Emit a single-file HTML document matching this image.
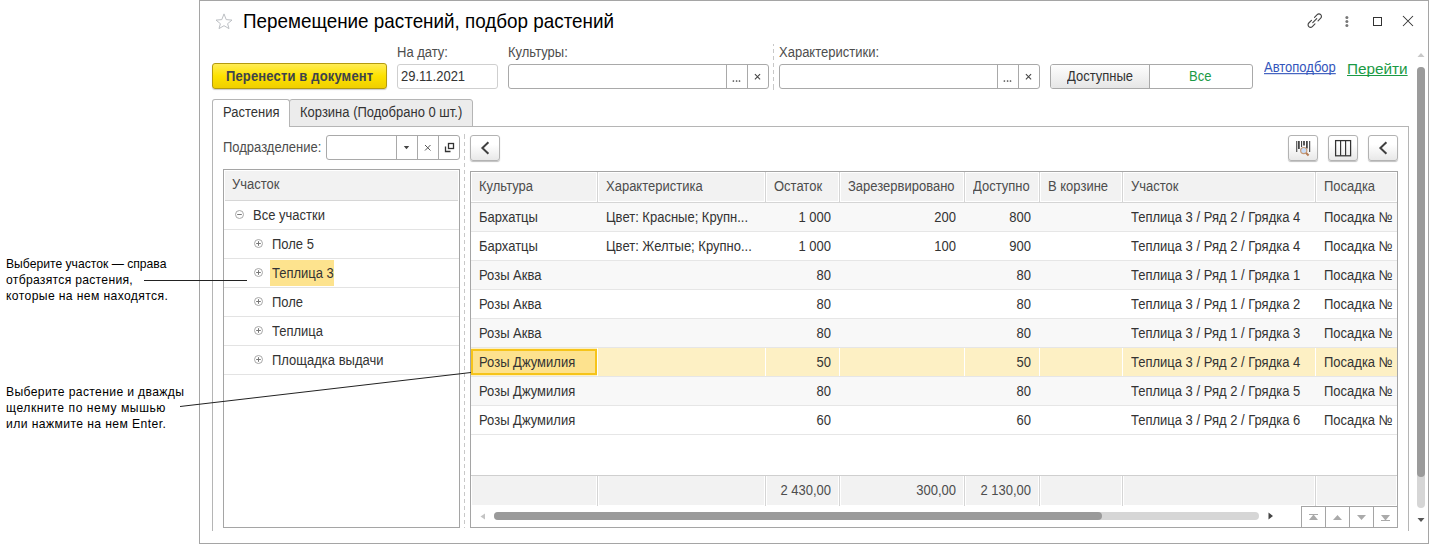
<!DOCTYPE html>
<html><head><meta charset="utf-8">
<style>
*{box-sizing:border-box;margin:0;padding:0}
html,body{width:1429px;height:544px;overflow:hidden;background:#fff}
body{position:relative;font-family:"Liberation Sans",sans-serif;font-size:13px;color:#333}
.a{position:absolute}
.t{position:absolute;white-space:nowrap;line-height:15px;transform:scaleY(1.1);transform-origin:0 12px}
.note{position:absolute;font-size:13.5px;color:#000;line-height:16px;white-space:nowrap;transform:scaleX(0.9);transform-origin:0 0}
.fld{position:absolute;border:1px solid #a9a9a9;border-radius:3px;background:#fff}
.sep{position:absolute;top:0;bottom:0;width:1px;background:#a9a9a9}
.btn{position:absolute;border:1px solid #b3b3b3;border-radius:3px;background:linear-gradient(#fff 35%,#e8e8e8);box-shadow:0 1px 1px rgba(0,0,0,.25)}
.vdash{position:absolute;width:1px;background:repeating-linear-gradient(#c8c8c8 0 4px,transparent 4px 7px);background-position:0 -2px}
.row{position:absolute;left:1px;right:1px;height:29px;border-bottom:1px solid #e4e4e4}
.g{background:#f8f8f8}
.hsep{position:absolute;top:0;bottom:0;width:2px;border-left:1px solid #d4d4d4;border-right:1px solid #fff}
</style></head><body>

<!-- annotations -->
<div class="note" style="left:6px;top:256px"><div style="letter-spacing:0px">Выберите участок — справа</div><div style="letter-spacing:0.32px">отбразятся растения,</div><div style="letter-spacing:0.42px">которые на нем находятся.</div></div>
<div class="note" style="left:6px;top:384px"><div style="letter-spacing:0.39px">Выберите растение и дважды</div><div style="letter-spacing:0.6px">щелкните по нему мышью</div><div style="letter-spacing:0.45px">или нажмите на нем Enter.</div></div>

<!-- window -->
<div class="a" style="left:199px;top:0;width:1230px;height:544px;border:1px solid #a5a5a5;background:#fff"></div>

<!-- star -->
<svg class="a" style="left:215px;top:13px" width="18" height="17" viewBox="0 0 18 17"><path d="M9 0.9 L11.2 6.6 L17 7.1 L12.6 10.7 L14 15.6 L9 12.7 L4 15.6 L5.4 10.7 L1 7.1 L6.8 6.6 Z" fill="none" stroke="#b8bcc0" stroke-width="0.95" stroke-linejoin="round"/></svg>
<div class="t" style="left:243px;top:11px;font-size:18.85px;line-height:22px;color:#000;transform:scaleY(1.08);transform-origin:0 17.6px">Перемещение растений, подбор растений</div>

<!-- title icons -->
<svg class="a" style="left:1305px;top:11px" width="20" height="19" viewBox="0 0 20 19">
<g transform="translate(9.75 9.6) scale(0.88) translate(-9.75 -9.25)"><path d="M9.5 5.5 L12.5 2.5 a2.6 2.6 0 0 1 4 4 L13.5 9.5 M10 13 L7 16 a2.6 2.6 0 0 1 -4 -4 L6 9 M7.5 11.5 L12 7" fill="none" stroke="#444" stroke-width="1.3" stroke-linecap="round"/></g></svg>
<svg class="a" style="left:1344px;top:15px" width="6" height="14"><circle cx="2.9" cy="2.6" r="1.5" fill="#777"/><circle cx="2.9" cy="6.6" r="1.5" fill="#777"/><circle cx="2.9" cy="10.5" r="1.5" fill="#777"/></svg>
<div class="a" style="left:1373px;top:17px;width:9px;height:9px;border:1.4px solid #333"></div>
<svg class="a" style="left:1402px;top:15px" width="12" height="12" viewBox="0 0 12 12"><path d="M1 1 L11 11 M11 1 L1 11" stroke="#333" stroke-width="1.05"/></svg>

<!-- labels -->
<div class="t" style="left:397px;top:45px;color:#4d4d4d">На дату:</div>
<div class="t" style="left:508px;top:45px;color:#4d4d4d">Культуры:</div>
<div class="t" style="left:779px;top:45px;color:#4d4d4d">Характеристики:</div>

<!-- yellow button -->
<div class="a" style="left:212px;top:63px;width:175px;height:26px;border:1px solid #b39a10;border-radius:3px;background:linear-gradient(#ffec55,#fde200 50%,#f0cf00);box-shadow:0 1px 1px rgba(0,0,0,.2)"></div>
<div class="t" style="left:226px;top:69px;font-weight:bold;color:#3e434c;letter-spacing:0.15px">Перенести в документ</div>

<!-- date -->
<div class="fld" style="left:397px;top:64px;width:101px;height:25px;border-color:#cfcfcf"></div>
<div class="t" style="left:401px;top:69px;color:#333">29.11.2021</div>

<!-- cultures -->
<div class="fld" style="left:508px;top:64px;width:261px;height:25px">
 <div class="sep" style="left:217px"></div><div class="sep" style="left:238px"></div>
 <svg class="a" style="left:222px;top:14px" width="12" height="4"><circle cx="2.4" cy="2" r="0.85" fill="#444"/><circle cx="5.6" cy="2" r="0.85" fill="#444"/><circle cx="8.5" cy="2" r="0.85" fill="#444"/></svg>
 <svg class="a" style="left:244px;top:8px" width="9" height="8"><path d="M1.9 1.1L7.1 6.3M7.1 1.1L1.9 6.3" stroke="#444" stroke-width="1.05"/></svg>
</div>
<div class="vdash" style="left:773px;top:44px;height:46px"></div>
<div class="fld" style="left:779px;top:64px;width:261px;height:25px">
 <div class="sep" style="left:217px"></div><div class="sep" style="left:238px"></div>
 <svg class="a" style="left:222px;top:14px" width="12" height="4"><circle cx="2.4" cy="2" r="0.85" fill="#444"/><circle cx="5.6" cy="2" r="0.85" fill="#444"/><circle cx="8.5" cy="2" r="0.85" fill="#444"/></svg>
 <svg class="a" style="left:244px;top:8px" width="9" height="8"><path d="M1.9 1.1L7.1 6.3M7.1 1.1L1.9 6.3" stroke="#444" stroke-width="1.05"/></svg>
</div>

<!-- toggle -->
<div class="a" style="left:1050px;top:64px;width:203px;height:25px;border:1px solid #a9a9a9;border-radius:3px;background:#fff;overflow:hidden">
 <div class="a" style="left:0;top:0;width:99px;height:23px;background:linear-gradient(#fdfdfd,#e6e6e6);border-right:1px solid #a9a9a9"></div>
</div>
<div class="t" style="left:1067px;top:69px;color:#333">Доступные</div>
<div class="t" style="left:1189px;top:69px;color:#1a9a45">Все</div>

<div class="t" style="left:1264px;top:60px;color:#3355bb;text-decoration:underline;text-decoration-skip-ink:none">Автоподбор</div>
<div class="t" style="left:1347px;top:60px;font-size:15.3px;line-height:17px;color:#1a9a45;text-decoration:underline;text-decoration-skip-ink:none;transform:none">Перейти</div>

<!-- vertical scrollbar -->
<svg class="a" style="left:1417px;top:52px" width="8" height="6"><path d="M0.5 5 L4 1 L7.5 5Z" fill="#c8c8c8"/></svg>
<div class="a" style="left:1417px;top:67px;width:8px;height:441px;border-radius:4px;background:#d6d6d6"></div>
<div class="a" style="left:1417px;top:67px;width:8px;height:410px;border-radius:4px;background:#9b9b9b"></div>
<svg class="a" style="left:1417px;top:517px" width="8" height="6"><path d="M0.5 1 L4 5 L7.5 1Z" fill="#555"/></svg>

<!-- tabs -->
<div class="a" style="left:289px;top:99px;width:184px;height:28px;border:1px solid #b5b5b5;border-radius:3px 3px 0 0;background:#ececec"></div>
<div class="a" style="left:212px;top:99px;width:78px;height:28px;border:1px solid #b5b5b5;border-bottom:none;border-radius:3px 3px 0 0;background:#fff"></div>
<div class="t" style="left:223px;top:105px;color:#333">Растения</div>
<div class="t" style="left:300px;top:105px;color:#333">Корзина (Подобрано 0 шт.)</div>
<div class="a" style="left:289px;top:126px;width:1120px;height:1px;background:#b5b5b5"></div>
<div class="a" style="left:212px;top:126px;width:1px;height:405px;background:#b5b5b5"></div>
<div class="a" style="left:1408px;top:126px;width:1px;height:405px;background:#b5b5b5"></div>

<!-- subdivision -->
<div class="t" style="left:223px;top:140px;color:#4d4d4d">Подразделение:</div>
<div class="fld" style="left:326px;top:135px;width:134px;height:25px">
 <div class="sep" style="left:69px"></div><div class="sep" style="left:90px"></div><div class="sep" style="left:111px"></div>
</div>
<div class="vdash" style="left:464px;top:134px;height:394px;background-position:0 1px"></div>

<!-- tree -->
<div class="a" style="left:223px;top:169px;width:237px;height:359px;border:1px solid #a5a5a5;background:#fff">
 <div class="a" style="left:1px;top:1px;right:1px;height:30px;background:#f2f2f2;border-bottom:1px solid #d6d6d6"></div>
</div>
<div class="t" style="left:232px;top:177px;color:#4d4d4d">Участок</div>

<!-- grid -->
<div class="a" style="left:470px;top:171px;width:928px;height:357px;border:1px solid #a5a5a5;background:#fff"></div>

<!-- tree rows -->
<div class="a" style="left:224px;top:229px;width:235px;height:1px;background:#e3e3e3"></div>
<div class="a" style="left:224px;top:258px;width:235px;height:1px;background:#e3e3e3"></div>
<div class="a" style="left:224px;top:287px;width:235px;height:1px;background:#e3e3e3"></div>
<div class="a" style="left:224px;top:316px;width:235px;height:1px;background:#e3e3e3"></div>
<div class="a" style="left:224px;top:345px;width:235px;height:1px;background:#e3e3e3"></div>
<div class="a" style="left:224px;top:374px;width:235px;height:1px;background:#e3e3e3"></div>
<div class="a" style="left:270px;top:260px;width:64px;height:26px;background:#fde38e"></div>
<svg class="a" style="left:234px;top:209px" width="11" height="11"><circle cx="5.5" cy="5.5" r="4" fill="none" stroke="#a8a8a8"/><path d="M3.2 5.5H7.8" stroke="#777"/></svg>
<svg class="a" style="left:253px;top:238px" width="11" height="11"><circle cx="5.5" cy="5.5" r="4" fill="none" stroke="#a8a8a8"/><path d="M3.2 5.5H7.8M5.5 3.2V7.8" stroke="#777"/></svg>
<svg class="a" style="left:253px;top:267px" width="11" height="11"><circle cx="5.5" cy="5.5" r="4" fill="none" stroke="#a8a8a8"/><path d="M3.2 5.5H7.8M5.5 3.2V7.8" stroke="#777"/></svg>
<svg class="a" style="left:253px;top:296px" width="11" height="11"><circle cx="5.5" cy="5.5" r="4" fill="none" stroke="#a8a8a8"/><path d="M3.2 5.5H7.8M5.5 3.2V7.8" stroke="#777"/></svg>
<svg class="a" style="left:253px;top:325px" width="11" height="11"><circle cx="5.5" cy="5.5" r="4" fill="none" stroke="#a8a8a8"/><path d="M3.2 5.5H7.8M5.5 3.2V7.8" stroke="#777"/></svg>
<svg class="a" style="left:253px;top:354px" width="11" height="11"><circle cx="5.5" cy="5.5" r="4" fill="none" stroke="#a8a8a8"/><path d="M3.2 5.5H7.8M5.5 3.2V7.8" stroke="#777"/></svg>
<div class="t" style="left:253px;top:208px">Все участки</div>
<div class="t" style="left:272px;top:237px">Поле 5</div>
<div class="t" style="left:272px;top:266px">Теплица 3</div>
<div class="t" style="left:272px;top:295px">Поле</div>
<div class="t" style="left:272px;top:324px">Теплица</div>
<div class="t" style="left:272px;top:353px">Площадка выдачи</div>

<!-- nav left button -->
<div class="btn" style="left:470px;top:135px;width:30px;height:26px"></div>
<svg class="a" style="left:479px;top:141px" width="12" height="14"><path d="M9.4 1.3 L3.4 7 L9.4 12.7" fill="none" stroke="#404040" stroke-width="2"/></svg>
<!-- right toolbar buttons -->
<div class="btn" style="left:1288px;top:135px;width:30px;height:26px"></div>
<div class="btn" style="left:1328px;top:135px;width:30px;height:26px"></div>
<div class="btn" style="left:1368px;top:135px;width:30px;height:26px"></div>
<svg class="a" style="left:1294px;top:139px" width="20" height="20">
<path d="M2.75 2V13M7.6 2V8M15.7 2V13" stroke="#333" stroke-width="1"/>
<path d="M4.9 2V10M10 2V6.6M12.9 2V9.5" stroke="#333" stroke-width="1.6"/>
<circle cx="9.75" cy="11.6" r="3.1" fill="#c8dcf6" stroke="#c49a78" stroke-width="1.2"/>
<path d="M12.1 14 L14.6 16.5" stroke="#b57c55" stroke-width="2"/>
</svg>
<svg class="a" style="left:1334px;top:139px" width="18" height="18"><rect x="1.6" y="1.6" width="15" height="15.2" fill="none" stroke="#333" stroke-width="1.25"/><path d="M6.6 1.6V16.8M11.6 1.6V16.8" stroke="#333" stroke-width="1.15"/></svg>
<svg class="a" style="left:1377px;top:141px" width="12" height="14"><path d="M9.4 1.3 L3.4 7 L9.4 12.7" fill="none" stroke="#404040" stroke-width="2"/></svg>
<!-- subdivision field icons -->
<svg class="a" style="left:403px;top:145px" width="8" height="5"><path d="M0.8 1H6.2L3.5 4.2Z" fill="#444"/></svg>
<svg class="a" style="left:424px;top:144px" width="8" height="8"><path d="M1 1L6.5 6.5M6.5 1L1 6.5" stroke="#555" stroke-width="1"/></svg>
<svg class="a" style="left:444px;top:142px" width="11" height="11"><path d="M1.5 4.5V9.5H6.5" fill="none" stroke="#333" stroke-width="1.3"/><rect x="4.5" y="1.5" width="5" height="5" fill="none" stroke="#333" stroke-width="1.3"/></svg>
<!-- grid header -->
<div class="a" style="left:471px;top:172px;width:926px;height:30px;background:#fff"></div>
<div class="a" style="left:471px;top:172px;width:126px;height:30px;border:1px solid #fff;background:#f2f2f2"></div>
<div class="a" style="left:597px;top:172px;width:1px;height:30px;background:#d5d5d5"></div>
<div class="t" style="left:479px;top:179px;color:#4d4d4d">Культура</div>
<div class="a" style="left:598px;top:172px;width:167px;height:30px;border:1px solid #fff;background:#f2f2f2"></div>
<div class="a" style="left:765px;top:172px;width:1px;height:30px;background:#d5d5d5"></div>
<div class="t" style="left:606px;top:179px;color:#4d4d4d">Характеристика</div>
<div class="a" style="left:766px;top:172px;width:73px;height:30px;border:1px solid #fff;background:#f2f2f2"></div>
<div class="a" style="left:839px;top:172px;width:1px;height:30px;background:#d5d5d5"></div>
<div class="t" style="left:774px;top:179px;color:#4d4d4d">Остаток</div>
<div class="a" style="left:840px;top:172px;width:124px;height:30px;border:1px solid #fff;background:#f2f2f2"></div>
<div class="a" style="left:964px;top:172px;width:1px;height:30px;background:#d5d5d5"></div>
<div class="t" style="left:848px;top:179px;color:#4d4d4d">Зарезервировано</div>
<div class="a" style="left:965px;top:172px;width:74px;height:30px;border:1px solid #fff;background:#f2f2f2"></div>
<div class="a" style="left:1039px;top:172px;width:1px;height:30px;background:#d5d5d5"></div>
<div class="t" style="left:973px;top:179px;color:#4d4d4d">Доступно</div>
<div class="a" style="left:1040px;top:172px;width:82px;height:30px;border:1px solid #fff;background:#f2f2f2"></div>
<div class="a" style="left:1122px;top:172px;width:1px;height:30px;background:#d5d5d5"></div>
<div class="t" style="left:1048px;top:179px;color:#4d4d4d">В корзине</div>
<div class="a" style="left:1123px;top:172px;width:192px;height:30px;border:1px solid #fff;background:#f2f2f2"></div>
<div class="a" style="left:1315px;top:172px;width:1px;height:30px;background:#d5d5d5"></div>
<div class="t" style="left:1131px;top:179px;color:#4d4d4d">Участок</div>
<div class="a" style="left:1316px;top:172px;width:81px;height:30px;border:1px solid #fff;background:#f2f2f2"></div>
<div class="t" style="left:1324px;top:179px;color:#4d4d4d">Посадка</div>
<div class="a" style="left:471px;top:202px;width:926px;height:1px;background:#d5d5d5"></div>
<!-- grid rows -->
<div class="a" style="left:471px;top:203px;width:926px;height:28px;background:#f8f8f8"></div>
<div class="a" style="left:471px;top:231px;width:926px;height:1px;background:#e6e6e6"></div>
<div class="t" style="left:479px;top:210px;color:#333">Бархатцы</div>
<div class="t" style="left:606px;top:210px;color:#333">Цвет: Красные; Крупн...</div>
<div class="t" style="right:598px;top:210px;color:#333">1 000</div>
<div class="t" style="right:473px;top:210px;color:#333">200</div>
<div class="t" style="right:398px;top:210px;color:#333">800</div>
<div class="t" style="left:1131px;top:210px;color:#333">Теплица 3 / Ряд 2 / Грядка 4</div>
<div class="t" style="left:1324px;top:210px;color:#333">Посадка №</div>
<div class="a" style="left:471px;top:232px;width:926px;height:28px;background:#fff"></div>
<div class="a" style="left:471px;top:260px;width:926px;height:1px;background:#e6e6e6"></div>
<div class="t" style="left:479px;top:239px;color:#333">Бархатцы</div>
<div class="t" style="left:606px;top:239px;color:#333">Цвет: Желтые; Крупно...</div>
<div class="t" style="right:598px;top:239px;color:#333">1 000</div>
<div class="t" style="right:473px;top:239px;color:#333">100</div>
<div class="t" style="right:398px;top:239px;color:#333">900</div>
<div class="t" style="left:1131px;top:239px;color:#333">Теплица 3 / Ряд 2 / Грядка 4</div>
<div class="t" style="left:1324px;top:239px;color:#333">Посадка №</div>
<div class="a" style="left:471px;top:261px;width:926px;height:28px;background:#f8f8f8"></div>
<div class="a" style="left:471px;top:289px;width:926px;height:1px;background:#e6e6e6"></div>
<div class="t" style="left:479px;top:268px;color:#333">Розы Аква</div>
<div class="t" style="right:598px;top:268px;color:#333">80</div>
<div class="t" style="right:398px;top:268px;color:#333">80</div>
<div class="t" style="left:1131px;top:268px;color:#333">Теплица 3 / Ряд 1 / Грядка 1</div>
<div class="t" style="left:1324px;top:268px;color:#333">Посадка №</div>
<div class="a" style="left:471px;top:290px;width:926px;height:28px;background:#fff"></div>
<div class="a" style="left:471px;top:318px;width:926px;height:1px;background:#e6e6e6"></div>
<div class="t" style="left:479px;top:297px;color:#333">Розы Аква</div>
<div class="t" style="right:598px;top:297px;color:#333">80</div>
<div class="t" style="right:398px;top:297px;color:#333">80</div>
<div class="t" style="left:1131px;top:297px;color:#333">Теплица 3 / Ряд 1 / Грядка 2</div>
<div class="t" style="left:1324px;top:297px;color:#333">Посадка №</div>
<div class="a" style="left:471px;top:319px;width:926px;height:28px;background:#f8f8f8"></div>
<div class="a" style="left:471px;top:347px;width:926px;height:1px;background:#e6e6e6"></div>
<div class="t" style="left:479px;top:326px;color:#333">Розы Аква</div>
<div class="t" style="right:598px;top:326px;color:#333">80</div>
<div class="t" style="right:398px;top:326px;color:#333">80</div>
<div class="t" style="left:1131px;top:326px;color:#333">Теплица 3 / Ряд 1 / Грядка 3</div>
<div class="t" style="left:1324px;top:326px;color:#333">Посадка №</div>
<div class="a" style="left:471px;top:348px;width:926px;height:28px;background:#fdf0c4"></div>
<div class="a" style="left:471px;top:376px;width:926px;height:1px;background:#e6e6e6"></div>
<div class="a" style="left:597px;top:348px;width:1px;height:28px;background:#fff"></div>
<div class="a" style="left:765px;top:348px;width:1px;height:28px;background:#fff"></div>
<div class="a" style="left:839px;top:348px;width:1px;height:28px;background:#fff"></div>
<div class="a" style="left:964px;top:348px;width:1px;height:28px;background:#fff"></div>
<div class="a" style="left:1039px;top:348px;width:1px;height:28px;background:#fff"></div>
<div class="a" style="left:1122px;top:348px;width:1px;height:28px;background:#fff"></div>
<div class="a" style="left:1315px;top:348px;width:1px;height:28px;background:#fff"></div>
<div class="a" style="left:471px;top:349px;width:126px;height:26px;border:2px solid #f6c41a;background:#fde28e"></div>
<div class="t" style="left:479px;top:355px;color:#333">Розы Джумилия</div>
<div class="t" style="right:598px;top:355px;color:#333">50</div>
<div class="t" style="right:398px;top:355px;color:#333">50</div>
<div class="t" style="left:1131px;top:355px;color:#333">Теплица 3 / Ряд 2 / Грядка 4</div>
<div class="t" style="left:1324px;top:355px;color:#333">Посадка №</div>
<div class="a" style="left:471px;top:377px;width:926px;height:28px;background:#f8f8f8"></div>
<div class="a" style="left:471px;top:405px;width:926px;height:1px;background:#e6e6e6"></div>
<div class="t" style="left:479px;top:384px;color:#333">Розы Джумилия</div>
<div class="t" style="right:598px;top:384px;color:#333">80</div>
<div class="t" style="right:398px;top:384px;color:#333">80</div>
<div class="t" style="left:1131px;top:384px;color:#333">Теплица 3 / Ряд 2 / Грядка 5</div>
<div class="t" style="left:1324px;top:384px;color:#333">Посадка №</div>
<div class="a" style="left:471px;top:406px;width:926px;height:28px;background:#fff"></div>
<div class="a" style="left:471px;top:434px;width:926px;height:1px;background:#e6e6e6"></div>
<div class="t" style="left:479px;top:413px;color:#333">Розы Джумилия</div>
<div class="t" style="right:598px;top:413px;color:#333">60</div>
<div class="t" style="right:398px;top:413px;color:#333">60</div>
<div class="t" style="left:1131px;top:413px;color:#333">Теплица 3 / Ряд 2 / Грядка 6</div>
<div class="t" style="left:1324px;top:413px;color:#333">Посадка №</div>
<!-- footer -->
<div class="a" style="left:471px;top:475px;width:926px;height:1px;background:#cfcfcf"></div>
<div class="a" style="left:472px;top:476px;width:124px;height:29px;background:#f2f2f2"></div>
<div class="a" style="left:597px;top:476px;width:1px;height:30px;background:#d5d5d5"></div>
<div class="a" style="left:599px;top:476px;width:165px;height:29px;background:#f2f2f2"></div>
<div class="a" style="left:765px;top:476px;width:1px;height:30px;background:#d5d5d5"></div>
<div class="a" style="left:767px;top:476px;width:71px;height:29px;background:#f2f2f2"></div>
<div class="a" style="left:839px;top:476px;width:1px;height:30px;background:#d5d5d5"></div>
<div class="a" style="left:841px;top:476px;width:122px;height:29px;background:#f2f2f2"></div>
<div class="a" style="left:964px;top:476px;width:1px;height:30px;background:#d5d5d5"></div>
<div class="a" style="left:966px;top:476px;width:72px;height:29px;background:#f2f2f2"></div>
<div class="a" style="left:1039px;top:476px;width:1px;height:30px;background:#d5d5d5"></div>
<div class="a" style="left:1041px;top:476px;width:80px;height:29px;background:#f2f2f2"></div>
<div class="a" style="left:1122px;top:476px;width:1px;height:30px;background:#d5d5d5"></div>
<div class="a" style="left:1124px;top:476px;width:190px;height:29px;background:#f2f2f2"></div>
<div class="a" style="left:1315px;top:476px;width:1px;height:30px;background:#d5d5d5"></div>
<div class="a" style="left:1317px;top:476px;width:79px;height:29px;background:#f2f2f2"></div>
<div class="t" style="right:598px;top:483px;color:#4d4d4d">2 430,00</div>
<div class="t" style="right:473px;top:483px;color:#4d4d4d">300,00</div>
<div class="t" style="right:398px;top:483px;color:#4d4d4d">2 130,00</div>
<!-- hscroll -->
<svg class="a" style="left:480px;top:513px" width="6" height="7"><path d="M5 0.5V6.5L0.5 3.5Z" fill="#c4c4c4"/></svg>
<div class="a" style="left:494px;top:512px;width:765px;height:8px;border-radius:4px;background:#d6d6d6"></div>
<div class="a" style="left:494px;top:512px;width:608px;height:8px;border-radius:4px;background:#9a9a9a"></div>
<svg class="a" style="left:1268px;top:512px" width="6" height="8"><path d="M0.5 0.5V7.5L5 4Z" fill="#444"/></svg>
<!-- nav buttons -->
<div class="a" style="left:1301px;top:506px;width:97px;height:22px;border:1px solid #a5a5a5;background:#fff"></div>
<div class="a" style="left:1325px;top:506px;width:1px;height:22px;background:#a5a5a5"></div>
<div class="a" style="left:1349px;top:506px;width:1px;height:22px;background:#a5a5a5"></div>
<div class="a" style="left:1373px;top:506px;width:1px;height:22px;background:#a5a5a5"></div>
<svg class="a" style="left:1308px;top:512px" width="12" height="10"><path d="M1 2.5H10" stroke="#aaa" stroke-width="1"/><path d="M1 8H10L5.5 2.5Z" fill="#aaa"/></svg>
<svg class="a" style="left:1332px;top:512px" width="12" height="10"><path d="M1 8H10L5.5 3Z" fill="#aaa"/></svg>
<svg class="a" style="left:1356px;top:512px" width="12" height="10"><path d="M1 3H10L5.5 8Z" fill="#aaa"/></svg>
<svg class="a" style="left:1380px;top:512px" width="12" height="10"><path d="M1 3H10L5.5 8.5Z" fill="#aaa"/><path d="M1 8.5H10" stroke="#aaa" stroke-width="1"/></svg>
<!-- annotation lines -->
<svg class="a" style="left:0;top:0" width="1429" height="544"><path d="M144 280.5H247" stroke="#222" stroke-width="1"/><path d="M180 406.5L471 372.5" stroke="#222" stroke-width="1"/></svg>
</body></html>
